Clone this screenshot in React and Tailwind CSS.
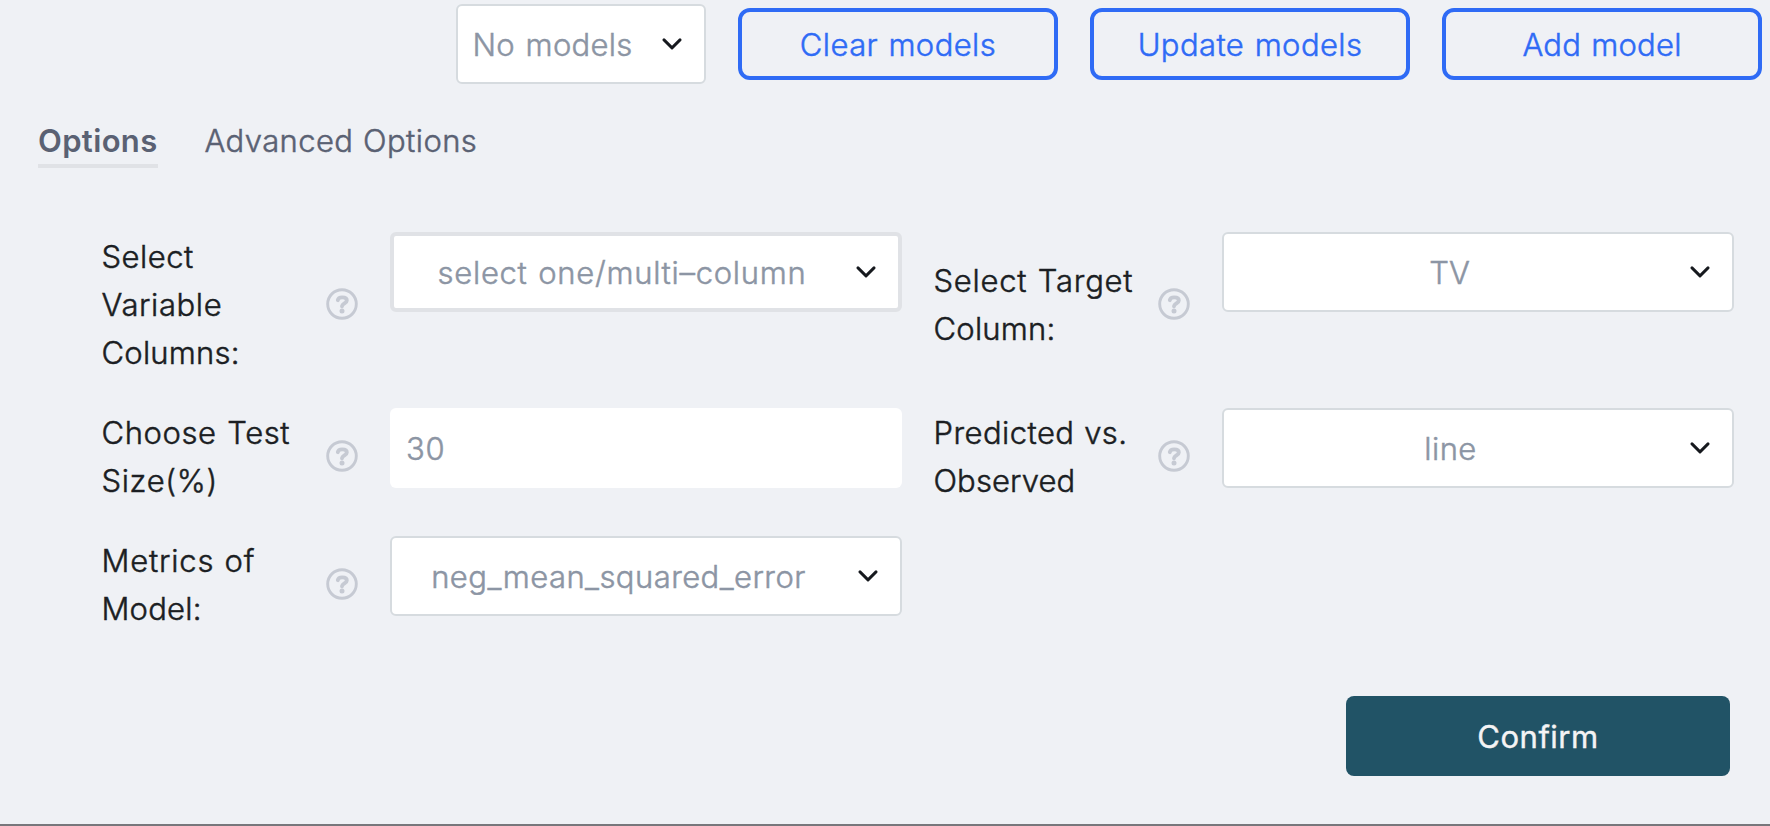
function Chevron({ className = "" }) {
  return (
    <svg className={`h-3 w-5 shrink-0 ${className}`} viewBox="0 0 20 12" fill="none">
      <path d="M2 1.9L10 9.9L18 1.9" stroke="#16191e" strokeWidth="2.9" strokeLinecap="round" strokeLinejoin="round" />
    </svg>
  );
}

function HelpIcon() {
  return (
    <svg className="size-8 shrink-0" viewBox="0 0 32 32" fill="none">
      <circle cx="16" cy="16" r="14.3" stroke="#c6cad3" strokeWidth="2.9" />
      <path d="M11.8 12.2C12.2 10.2 13.6 9.4 16.2 9.4C19.2 9.4 20.8 10.6 20.8 12.5C20.8 15.2 16.4 15.6 16 18.2" stroke="#c6cad3" strokeWidth="3.9" strokeLinecap="round" />
      <circle cx="16" cy="23" r="2.5" fill="#c6cad3" />
    </svg>
  );
}

function Dropdown({ text, textClass, frameClass = "border-2 border-[#d6dbdf]", chevronClass }) {
  return (
    <button className={`flex h-20 w-[512px] shrink-0 items-center rounded-[6px] bg-white ${frameClass}`}>
      <span className={`mt-px -mb-px whitespace-nowrap text-center text-[#8c95a4] ${textClass}`}>{text}</span>
      <Chevron className={chevronClass} />
    </button>
  );
}

function Field({ lines, children }) {
  return (
    <div className="flex w-[800px] items-center">
      <div className="mt-px -mb-px -ml-[0.5px] w-[224.5px] shrink-0 whitespace-nowrap text-[#1b1e23]">
        {lines.map(([text, tracking]) => (
          <span key={text} className={`block ${tracking}`}>{text}</span>
        ))}
      </div>
      <HelpIcon />
      <div className="ml-8 self-start">{children}</div>
    </div>
  );
}

function ActionButton({ children, className }) {
  return (
    <button className="flex h-[72px] w-80 items-center justify-center rounded-xl border-4 border-[#2f6bf5] text-[#2f6bf5]">
      <span className={`mt-px -mb-px ${className}`}>{children}</span>
    </button>
  );
}

export default function App() {
  return (
    <div className="flex h-[826px] w-[1770px] flex-col overflow-hidden border-b-2 border-[#77777b] bg-[#eff1f5] font-['Inter','Liberation_Sans',sans-serif] text-[31px] leading-[48px] font-light [-webkit-text-stroke:0.5px_currentColor]">
      <div className="flex items-center justify-end gap-8 pt-1 pr-2">
        <button className="flex h-20 w-[250px] items-center rounded-[6px] border-2 border-[#d6dbdf] bg-white pl-[14.5px]">
          <span className="mt-px -mb-px w-[189.5px] text-left tracking-[0.3px] whitespace-nowrap text-[#8c95a4] [word-spacing:1.5px]">No models</span>
          <Chevron />
        </button>
        <ActionButton className="tracking-[0.4px] [word-spacing:1.2px]">Clear models</ActionButton>
        <ActionButton className="tracking-[0.4px] [word-spacing:1.4px]">Update models</ActionButton>
        <ActionButton className="tracking-[0.2px] [word-spacing:1.3px]">Add model</ActionButton>
      </div>

      <div className="mt-8 flex gap-[46.5px] pl-[38px] text-[#5a6173]">
        <div className="h-[52px] w-[120px] border-b-4 border-[#e0e2e6] text-left font-semibold tracking-[0.35px] [-webkit-text-stroke:0px]">
          <div className="mt-px">Options</div>
        </div>
        <div className="mt-px tracking-[0.4px] [word-spacing:0.6px]">Advanced Options</div>
      </div>

      <div className="mt-16 grid grid-cols-[800px_800px] gap-8 pl-[102px]">
        <Field lines={[["Select", "tracking-[0.5px]"], ["Variable", "tracking-[0.6px]"], ["Columns:", "tracking-[0.22px]"]]}>
          <Dropdown text="select one/multi–column" textClass="w-[456px] tracking-[0.7px] [word-spacing:1.3px]" frameClass="border-4 border-[#e0e2e6]" chevronClass="ml-[6px]" />
        </Field>
        <Field lines={[["Select Target", "tracking-[0.75px] [word-spacing:1px]"], ["Column:", "tracking-[0.22px]"]]}>
          <Dropdown text="TV" textClass="w-[451px] tracking-[-0.1px]" chevronClass="ml-[15px]" />
        </Field>
        <Field lines={[["Choose Test", "tracking-[0.6px] [word-spacing:1.3px]"], ["Size(%)", "tracking-[0.65px]"]]}>
          <div className="h-20 w-[512px] rounded-[6px] bg-white pt-[17px] pl-4 tracking-[0.6px] text-[#8c95a4]">30</div>
        </Field>
        <Field lines={[["Predicted vs.", "tracking-[0.45px] [word-spacing:0.5px]"], ["Observed", "tracking-[0.1px]"]]}>
          <Dropdown text="line" textClass="w-[453px] tracking-[0.4px]" chevronClass="ml-[13px]" />
        </Field>
        <Field lines={[["Metrics of", "tracking-[0.8px] [word-spacing:0.8px]"], ["Model:", "tracking-[0.2px]"]]}>
          <Dropdown text="neg_mean_squared_error" textClass="w-[453px] tracking-[0.44px]" chevronClass="ml-[13px]" />
        </Field>
      </div>

      <div className="mt-16 flex justify-end pr-10">
        <button className="flex h-20 w-96 items-center justify-center rounded-lg bg-[#215366] font-normal text-[#f4f3f4] [-webkit-text-stroke:0.4px_currentColor]">
          <span className="mt-px -mb-px tracking-[0.5px]">Confirm</span>
        </button>
      </div>
    </div>
  );
}
